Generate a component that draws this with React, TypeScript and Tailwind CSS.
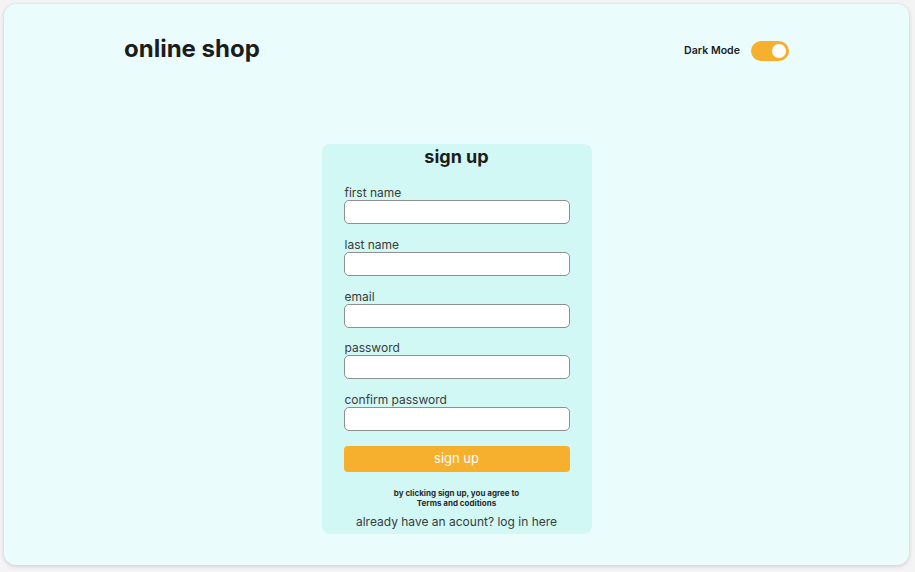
export default function App() {
  const fields = ["first name", "last name", "email", "password", "confirm password"]

  return (
    <div className="min-h-screen bg-[#f4f4f4] pt-1 pl-1 font-['Inter',sans-serif]">
      <div className="w-[905px] h-[561px] rounded-xl bg-[#ebfcfc] shadow-[0_1px_4px_rgba(0,0,0,0.18)] flex flex-col">

        {/* Header */}
        <header className="flex items-center justify-between pl-[120px] pr-[120px] pt-[30px]">
          <h1 className="text-[24px] font-bold text-[#1c1c1c] leading-[30px]">online shop</h1>
          <div className="flex items-center gap-[11px] mt-[4px]">
            <span className="text-[10.6px] font-semibold text-[#1c1c1c]">Dark Mode</span>
            <div className="w-[38px] h-[20px] rounded-full bg-[#f7b02e] flex items-center justify-end pr-[3px]">
              <div className="w-[14px] h-[14px] rounded-full bg-white" />
            </div>
          </div>
        </header>

        {/* Sign up card */}
        <main className="flex justify-center mt-[80px]">
          <div className="w-[270px] rounded-lg bg-[#d2f8f6] px-[22px] pt-[1px] pb-[3px] flex flex-col">
            <h2 className="text-center text-[18px] font-bold text-[#1c1c1c] leading-[24px]">sign up</h2>
            <div className="mt-[17px] flex flex-col gap-[13.8px]">
              {fields.map((f) => (
                <label key={f} className="flex flex-col">
                  <span className="pl-[1px] text-[12px] text-[#3a3a3a] leading-[14px]">{f}</span>
                  <input
                    type={f.includes("password") ? "password" : "text"}
                    className="h-[24px] rounded-[5px] border border-[#8f8f8f] bg-white px-2 outline-none"
                  />
                </label>
              ))}
            </div>
            <button className="mt-[15px] h-[26px] rounded-[4px] bg-[#f7b02e] text-[13px] text-white">sign up</button>
            <p className="mt-[16px] text-center text-[8px] font-bold text-[#2a2a2a] leading-[10px]">
              by clicking sign up, you agree to<br />Terms and coditions
            </p>
            <p className="mt-[5px] text-center text-[12px] text-[#3a3a3a] leading-[18px]">
              already have an acount? log in here
            </p>
          </div>
        </main>
      </div>
    </div>
  )
}
